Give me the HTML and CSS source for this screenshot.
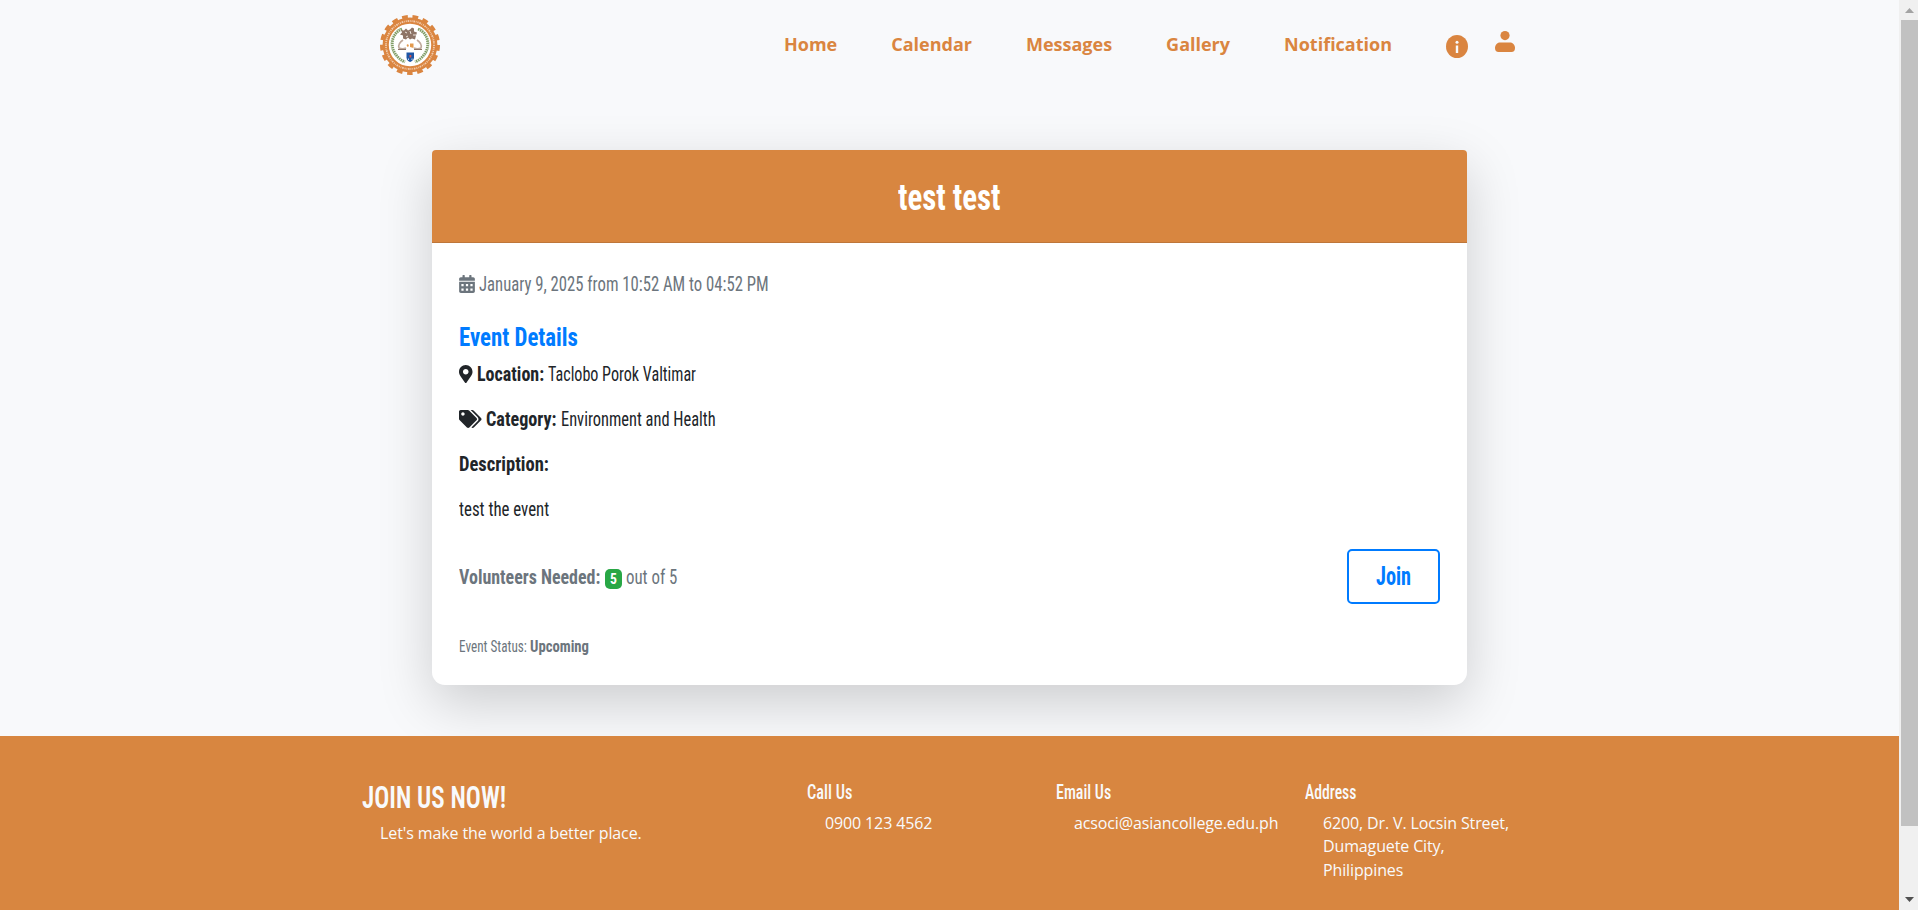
FILE: index.html
```html
<!DOCTYPE html>
<html lang="en">
<head>
<meta charset="utf-8">
<title>test test</title>
<link rel="stylesheet" href="styles.css">
</head>
<body>
<div class="page">
  <header class="navbar">
    <svg class="logo" viewBox="0 0 60 60">
      <circle cx="30" cy="30" r="24.3" fill="#fff" stroke="#da8540" stroke-width="6.2"/>
      <circle cx="30" cy="30" r="28.400" fill="none" stroke="#da8540" stroke-width="3.200" stroke-dasharray="5.800 4.697" stroke-dashoffset="2.900" transform="rotate(90 30 30)"/>
      <circle cx="30" cy="30" r="24" fill="none" stroke="#fff3e8" stroke-width="1.800" stroke-dasharray="1 .9 1.600 .8 .7 1" opacity=".65"/>
      <g fill="none" stroke="#7d9a62" stroke-width="2.800" stroke-dasharray="1.500 .7">
        <path d="M22 14C9 19 8 39 25 47"/>
        <path d="M38 14c13 5 14 25-3 33"/>
      </g>
      <g fill="none" stroke="#b7c8a2" stroke-width="1" stroke-dasharray="1 1.200">
        <path d="M20 13C7 20 8 40 23 47"/>
        <path d="M40 13c13 7 12 27-3 34"/>
      </g>
      <path d="M21 15l3 .5 2-2 2 2 2-1 2-2 2 1 0 3 3 1-1 3-1 4-3-1-2 1-2-2-2 2-3-1 0-3-3-1 2-2z" fill="#8d7466"/>
      <path d="M25 17l2 1M30 16l1 3M33 20l3 0M26 22l2-1" stroke="#efe6df" stroke-width="1"/>
      <path d="M23 25c-3 2-5 5-4 8 2 1 5 1 7 0M37 25c3 2 5 5 4 8-2 1-5 1-7 0" fill="none" stroke="#bfa99b" stroke-width="1.600"/>
      <path d="M18 34.500h8M42 34.500h-8" fill="none" stroke="#8d7466" stroke-width="1.200"/>
      <path d="M26.500 30l1.500-1 1 2-1.500 1zM30 28.500l3.500 0v4.500l-3.500-1z" fill="#e39a4e"/>
      <path d="M26.500 37.500h7.500v5c0 2-2 4-3.800 4.500C28.500 46.500 26.500 45 26.500 42.500z" fill="#1f56a5"/>
      <path d="M29.500 40h1.800v2.500h-1.800z" fill="#d8554a"/>
      <path d="M28 43.500h1v1.500h-1zM31.500 43.500h1v1.500h-1z" fill="#bcd6ee"/>
    </svg>
    <nav class="menu">
      <a>Home</a><a>Calendar</a><a>Messages</a><a>Gallery</a><a>Notification</a>
      <svg class="info" viewBox="0 0 22 23"><ellipse cx="11" cy="11.500" rx="11" ry="11.500" fill="#da8540"/><circle cx="11" cy="7.200" r="1.500" fill="#f8fafc"/><path d="M9.800 10.500h2.400v7.500h-2.400z" fill="#f8fafc"/></svg>
      <svg class="user" viewBox="0 0 20 21"><circle cx="10" cy="4.600" r="4.600" fill="#da8540"/><path d="M5 11.500h10c3 0 5 2.500 5 5.500 0 2.600-1.200 4-3.500 4h-13C1.200 21 0 19.600 0 17c0-3 2-5.500 5-5.500z" fill="#da8540"/></svg>
    </nav>
  </header>

  <main class="card">
    <h2 class="card-header"><span class="run title">test test</span></h2>
    <div class="card-body">
      <p class="line date"><svg class="icon cal" viewBox="0 0 448 512"><path fill-rule="evenodd" d="M0 464c0 26.500 21.500 48 48 48h352c26.500 0 48-21.500 48-48V192H0zM64 256h64v64H64zM192 256h64v64h-64zM320 256h64v64h-64zM64 384h64v64H64zM192 384h64v64h-64zM320 384h64v64h-64zM400 64h-48V16c0-8.800-7.200-16-16-16h-32c-8.800 0-16 7.200-16 16v48H160V16c0-8.800-7.200-16-16-16h-32c-8.800 0-16 7.200-16 16v48H48C21.500 64 0 85.500 0 112v48h448v-48c0-26.500-21.500-48-48-48z"/></svg><span class="run when">January 9, 2025 from 10:52 AM to 04:52 PM</span></p>
      <h4 class="subtitle"><span class="run details">Event Details</span></h4>
      <p class="line"><svg class="icon pin" viewBox="0 0 384 512"><path d="M172.268 501.670C26.970 291.031 0 269.413 0 192 0 85.961 85.961 0 192 0s192 85.961 192 192c0 77.413-26.970 99.031-172.268 309.670-9.535 13.774-29.930 13.773-39.464 0zM192 272c44.183 0 80-35.817 80-80s-35.817-80-80-80-80 35.817-80 80 35.817 80 80 80z"/></svg><b class="run loc">Location:</b><span class="run loc-value">Taclobo Porok Valtimar</span></p>
      <p class="line"><svg class="icon tags" viewBox="0 0 640 512"><path d="M497.941 225.941L286.059 14.059A48 48 0 0 0 252.118 0H48C21.490 0 0 21.490 0 48v204.118a48 48 0 0 0 14.059 33.941l211.882 211.882c18.744 18.745 49.136 18.746 67.882 0l204.118-204.118c18.745-18.745 18.745-49.137 0-67.882zM112 160c-26.510 0-48-21.490-48-48s21.490-48 48-48 48 21.490 48 48-21.490 48-48 48zm513.941 133.823L421.823 497.941c-18.745 18.745-49.137 18.745-67.882 0l-.36-.36L527.640 323.522c16.999-16.999 26.360-39.600 26.360-63.640s-9.362-46.641-26.360-63.640L331.397 0h48.721a48 48 0 0 1 33.941 14.059l211.882 211.882c18.745 18.745 18.745 49.137 0 67.882z"/></svg><b class="run cat">Category:</b><span class="run cat-value">Environment and Health</span></p>
      <p class="line"><b class="run desc">Description:</b></p>
      <p class="line"><span class="run desc-value">test the event</span></p>
      <div class="actions">
        <p class="line muted"><b class="run vol">Volunteers Needed:</b><span class="badge"><span class="run count">5</span></span><span class="run out">out of 5</span></p>
        <button class="join"><span class="run join-label">Join</span></button>
      </div>
      <p class="line muted"><span class="run status">Event Status:</span><b class="run status-value">Upcoming</b></p>
    </div>
  </main>

  <footer class="footer">
    <div class="join-us"><h3><span class="run cta">JOIN US NOW!</span></h3><p>Let's make the world a better place.</p></div>
    <div><h5><span class="run call">Call Us</span></h5><p>0900 123 4562</p></div>
    <div><h5><span class="run email">Email Us</span></h5><p>acsoci@asiancollege.edu.ph</p></div>
    <div><h5><span class="run address">Address</span></h5><p>6200, Dr. V. Locsin Street,<br>Dumaguete City,<br>Philippines</p></div>
  </footer>
</div>
<aside class="scrollbar">
  <svg class="arrow" viewBox="0 0 19 20"><path d="M6 13h9l-4.500-5z" fill="#a3a3a3"/></svg>
  <div class="thumb"></div>
  <svg class="arrow down" viewBox="0 0 19 20"><path d="M6 7h9l-4.500 5z" fill="#505050"/></svg>
</aside>
</body>
</html>
```
FILE: styles.css
```css
* { box-sizing: border-box; }
body {
  margin: 0;
  display: flex;
  height: 910px;
  overflow: hidden;
  background: #f8f9fb;
  color: #212529;
  font: 16px/23.5px "Open Sans", sans-serif;
}
h2, h3, h4, h5, p { margin: 0; }
.page { flex: 1; height: 910px; display: flex; flex-direction: column; overflow: hidden; }

.navbar {
  height: 90px;
  flex: none;
  padding: 0 384px 0 380px;
  display: flex;
  justify-content: space-between;
  align-items: center;
}
.logo { width: 60px; height: 60px; }
.menu { display: flex; align-items: center; color: #da8540; font-size: 18px; font-weight: 700; }
.menu a { margin-right: 54px; }
.info { width: 22px; height: 23px; margin: 3px 27px 0 0; }
.user { width: 20px; height: 21px; margin-top: -7px; }

/* Condensed runs: width is the drawn width, the glyphs are scaled down to it. */
.run {
  display: inline-block;
  white-space: nowrap;
  transform-origin: 0 50%;
}
.card, h3, h5, .join { font-family: Roboto, sans-serif; font-stretch: 75%; }
.card {
  width: 1035px;
  margin: 60px 0 0 432px;
  background: #fff;
  border-radius: 5px 5px 13px 13px;
  box-shadow: 0 18px 54px rgba(0, 0, 0, .175);
}
.card-header {
  height: 93px;
  padding-top: 29px;
  text-align: center;
  background: #d88640;
  border-bottom: 1px solid #be763a;
  border-radius: 4px 4px 0 0;
  color: #fff;
  font-size: 36px;
  line-height: 38px;
  font-weight: 700;
}
.title { width: 102.5px; transform: scaleX(.857); text-align: left; }
.card-body { height: 442px; padding: 28px 27px 26px; font-size: 20.5px; font-weight: 430; }
.line { height: 27px; line-height: 27px; margin-bottom: 18px; display: flex; }
.icon { height: 18px; margin: 4px 4px 0 0; fill: currentColor; }
.cal { width: 16px; }
.pin { width: 13.5px; margin-right: 4px; }
.tags { width: 22.5px; }
.date { color: #6c757d; margin-bottom: 25px; }
.when { width: 291px; transform: scaleX(.814); }
.subtitle { height: 29px; line-height: 29px; margin-bottom: 9px; font-size: 25px; color: #007bff; }
.details { width: 119px; transform: scaleX(.914); }
.loc { width: 71px; transform: scaleX(.878); }
.loc-value { transform: scaleX(.785); }
.cat { width: 75.5px; transform: scaleX(.885); }
.cat-value { transform: scaleX(.801); }
.desc { transform: scaleX(.903); }
.desc-value { transform: scaleX(.822); }
.actions { height: 55px; margin: 26px 0 27px; display: flex; justify-content: space-between; align-items: center; }
.actions .line { margin: 2px 0 0; }
.muted { color: #6c757d; }
.vol { width: 146px; transform: scaleX(.875); }
.badge {
  width: 17px;
  height: 20px;
  margin: 5px 4px 0 0;
  padding-left: 5px;
  background: #28a745;
  border-radius: 5px;
  color: #fff;
  font-size: 15.500px;
  font-weight: 700;
  line-height: 20px;
}
.count { width: 7px; transform: scaleX(.88); }
.out { transform: scaleX(.822); }
.join {
  width: 93px;
  height: 55px;
  padding: 0 0 0 27px;
  text-align: left;
  background: #fff;
  border: 2px solid #007bff;
  border-radius: 5px;
  color: #007bff;
  font-size: 25px;
  font-weight: 700;
}
.join-label { width: 35.5px; transform: scaleX(.81); }
.status { width: 71px; font-size: 16.4px; transform: scaleX(.805); padding-top: 2px; }
.status-value { font-size: 16.4px; transform: scaleX(.897); padding-top: 2px; }

.footer {
  flex: 1;
  margin-top: 51px;
  padding: 44px 0 0 362px;
  background: #d88640;
  color: #f8fafc;
  display: grid;
  grid-template-columns: 445px 249px 249px 249px;
}
.footer p { padding-left: 18px; letter-spacing: -.13px; }
.footer .join-us p { letter-spacing: -.1px; }
h3 { height: 37px; margin-bottom: 5px; font-size: 31px; line-height: 36px; font-weight: 600; }
h5 { height: 24px; margin-bottom: 7.6px; font-size: 20px; line-height: 24px; font-weight: 500; }
.cta { transform: scaleX(.807); }
.call { transform: scaleX(.815); }
.email { transform: scaleX(.8); }
.address { transform: scaleX(.785); }

.scrollbar { width: 19px; height: 910px; background: #f0f0f0; display: flex; flex-direction: column; }
.arrow { width: 19px; height: 20px; }
.thumb { height: 806px; margin-left: 2px; background: #c1c1c1; }
.down { margin-top: 64px; }
```
